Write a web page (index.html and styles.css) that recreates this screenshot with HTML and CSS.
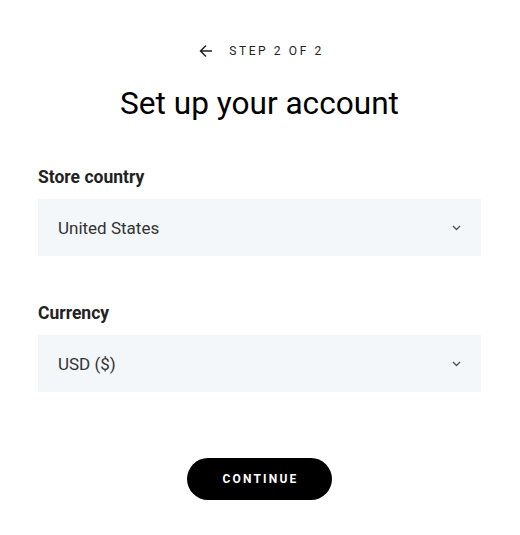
FILE: index.html
```html
<!DOCTYPE html>
<html>
<head>
<meta charset="utf-8">
<link rel="stylesheet" href="styles.css">
</head>
<body>
<div class="page">
  <div class="step">
    <svg class="back" width="14" height="14" viewBox="0 0 14 14"><path d="M13 7H1.5M7 1.5L1.5 7L7 12.5" fill="none" stroke="#222" stroke-width="1.5"/></svg>
    <span class="step-text">STEP 2 OF 2</span>
  </div>
  <h1 class="title">Set up your account</h1>
  <div class="field">
    <div class="label">Store country</div>
    <div class="select"><span>United States</span><svg class="chev" width="9" height="6" viewBox="0 0 9 6"><path d="M1 1L4.5 4.5L8 1" fill="none" stroke="#555" stroke-width="1.4"/></svg></div>
  </div>
  <div class="field">
    <div class="label">Currency</div>
    <div class="select"><span>USD ($)</span><svg class="chev" width="9" height="6" viewBox="0 0 9 6"><path d="M1 1L4.5 4.5L8 1" fill="none" stroke="#555" stroke-width="1.4"/></svg></div>
  </div>
  <div class="actions"><button class="btn">CONTINUE</button></div>
</div>
</body>
</html>
```
FILE: styles.css
```css
* { box-sizing: border-box; }
body { margin: 0; background: #fff; font-family: Roboto, "Liberation Sans", sans-serif; color: #111; }
.page { padding: 43px 39px 0 38px; }
.step { display: flex; align-items: center; justify-content: center; gap: 16px; height: 16px; }
.back { display: block; margin-left: 4px; }
.step-text { font-size: 12px; letter-spacing: 2.6px; color: #222; line-height: 16px; }
.title { margin: 27px 0 0; text-align: center; font-weight: 400; font-size: 31.6px; line-height: 36px; color: #000; }
.field { margin-top: 45px; }
.field + .field { margin-top: 47px; }
.label { font-size: 17.5px; font-weight: 700; color: #222; line-height: 21px; }
.select { margin-top: 11px; height: 57px; background: #f3f7fa; display: flex; align-items: center; justify-content: space-between; padding: 0 20px 0 20px; font-size: 17px; color: #333; }
.chev { display: block; }
.actions { display: flex; justify-content: center; margin-top: 66px; }
.btn { width: 145px; height: 42px; border: none; border-radius: 21px; background: #000; color: #fff; font-family: Roboto, "Liberation Sans", sans-serif; font-weight: 700; font-size: 12px; letter-spacing: 2.2px; padding: 0 0 0 2px; }
```
